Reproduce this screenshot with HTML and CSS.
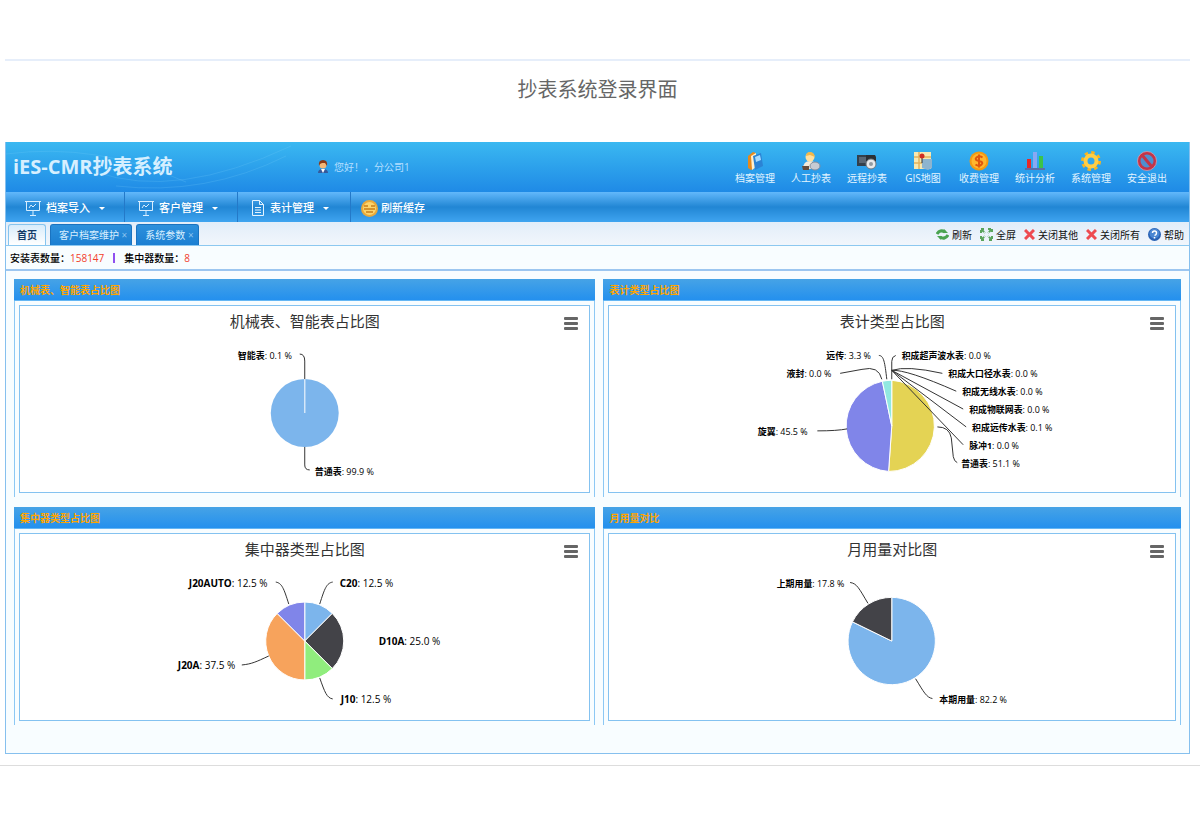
FILE: index.html
```html
<!DOCTYPE html>
<html lang="zh-CN">
<head>
<meta charset="utf-8">
<title>iES-CMR抄表系统</title>
<link rel="stylesheet" href="styles.css">
</head>
<body>
<h1 class="caption">抄表系统登录界面</h1>
<main class="app">
  <header class="banner">
    <svg class="swoosh" viewBox="0 0 300 50" aria-hidden="true"><path d="M90 30Q170 58 285 4M110 44Q200 54 280 14M0 12Q90 0 180 40" fill="none" stroke="#7fd0fa" stroke-opacity=".2"/></svg>
    <div class="brand">iES-CMR抄表系统</div>
    <div class="user">
      <svg width="12" height="14" viewBox="0 0 12 14"><path d="M1 13Q1 9 6 9T11 13Z" fill="#355a9c"/><path d="M4 9h4l-2 4z" fill="#fff"/><circle cx="6" cy="5" r="3.5" fill="#f3b777"/><path d="M2 6Q1 0 6 0T10 6L8 3H5L3 4Z" fill="#8a3a18"/></svg>
      <span>您好！，分公司1</span>
    </div>
    <nav class="tools">
      <a href="#"><svg viewBox="0 0 20 20"><path d="M3 5l5-4 3 1v14l-5 3-3-2z" fill="#e58a1c"/><path d="M6 5l5-3v14l-4 3z" fill="#fff0cf"/><path d="M8 5l8-3 2 13-8 4z" fill="#2b83d4"/><path d="M10 6l5-2 1 5-5 2z" fill="#a8dcff"/></svg>档案管理</a>
      <a href="#"><svg viewBox="0 0 20 20"><path d="M2 18Q2 10 9 10t8 8Z" fill="#f4ead8"/><path d="M1 15h7v4H2z" fill="#654c3b"/><circle cx="9" cy="6" r="4.500" fill="#ffe0a0"/><path d="M5 5Q5 1 9 1t5 5L9 4z" fill="#f2b84a"/><ellipse cx="14" cy="15" rx="5" ry="4" fill="#c7cbd3" stroke="#7f8da0"/></svg>人工抄表</a>
      <a href="#"><svg viewBox="0 0 20 20"><path d="M0 4h14v11H0z" fill="#33404c"/><path d="M2 6h9v6H2z" fill="#596775"/><path d="M9 4h9l1 2v5H9z" fill="#2a3036"/><circle cx="14" cy="13" r="5" fill="#e8eaec" stroke="#6d7880"/><circle cx="14" cy="13" r="2" fill="#929ba3"/></svg>远程抄表</a>
      <a href="#"><svg viewBox="0 0 20 20"><path d="M1 1h17v17H1z" fill="#f8e8b0"/><path d="M1 6h17M6 1v17M1 12h17" stroke="#e2b25c" stroke-width="1.500"/><path d="M9 8h10v9l-4 2-6-2z" fill="#8db4cf"/><path d="M9 5v7" stroke="#333"/><circle cx="9" cy="5" r="2.500" fill="#d22c20"/></svg>GIS地图</a>
      <a href="#"><svg viewBox="0 0 20 20"><circle cx="10" cy="10" r="9.500" fill="#f39a12"/><circle cx="10" cy="10" r="7.500" fill="#ffb62e"/><path d="M13.500 6.500Q10 4 7.500 6.500T10 10t2.500 3.500-6 0M10 3.500v13" stroke="#e0560d" stroke-width="2" fill="none"/></svg>收费管理</a>
      <a href="#"><svg viewBox="0 0 20 20"><path d="M0 17h20v2H0z" fill="#5a6fa8"/><path d="M2 8h4v9H2z" fill="#e82828"/><path d="M8 1h4v16H8z" fill="#88a8f4"/><path d="M14 5h4v12h-4z" fill="#3cc34a"/></svg>统计分析</a>
      <a href="#"><svg viewBox="0 0 20 20"><circle cx="10" cy="10" r="8" fill="none" stroke="#f8b520" stroke-width="4" stroke-dasharray="3.200 3.080"/><circle cx="10" cy="10" r="5.500" fill="none" stroke="#ffce45" stroke-width="4"/></svg>系统管理</a>
      <a href="#"><svg viewBox="0 0 20 20"><circle cx="10" cy="10" r="8" fill="#4f8fd0" stroke="#c43448" stroke-width="3"/><circle cx="10" cy="10" r="9.500" fill="none" stroke="#e8a1ad" stroke-width=".7"/><path d="M5 4l10 12" stroke="#c43448" stroke-width="3"/></svg>安全退出</a>
    </nav>
  </header>
  <nav class="menu">
    <button type="button"><svg width="16" height="16" viewBox="0 0 16 16" fill="none" stroke="#d8eeff"><path d="M0 1.500h16M1.500 2v8.500h13V2M8 11v4M5 15.500h6M4 8l2-3 2 2 3-3"/></svg>档案导入<i class="caret"></i></button>
    <button type="button"><svg width="16" height="16" viewBox="0 0 16 16" fill="none" stroke="#d8eeff"><path d="M0 1.500h16M1.500 2v8.500h13V2M8 11v4M5 15.500h6M4 8l2-3 2 2 3-3"/></svg>客户管理<i class="caret"></i></button>
    <button type="button"><svg width="14" height="16" viewBox="0 0 14 16" fill="none" stroke="#e4f3ff"><path d="M1.500.5h7l4 4v11h-11zM8.500.5v4h4M4 7.500h6M4 10h6M4 12.500h6"/></svg>表计管理<i class="caret"></i></button>
    <button type="button"><svg width="17" height="17" viewBox="0 0 17 17"><circle cx="8.500" cy="8.500" r="8.500" fill="#e9a93a"/><circle cx="8.500" cy="8.500" r="6.500" fill="#fcd46c"/><path d="M3 6h4M10 6h4M3 9h11M5 12h7" stroke="#c87d18" stroke-width="1.500"/></svg>刷新缓存</button>
  </nav>
  <div class="tabbar">
    <div class="tabs">
      <button type="button" class="tab active">首页</button>
      <button type="button" class="tab">客户档案维护 <span class="x">×</span></button>
      <button type="button" class="tab">系统参数 <span class="x">×</span></button>
    </div>
    <div class="actions">
      <button type="button"><svg width="13" height="13" viewBox="0 0 13 13" fill="none" stroke="#4aa350" stroke-width="3"><path d="M1 6Q4 1 9 4M12 7Q9 12 4 9"/><path d="M8 1l4 4H7zM5 12L1 8h5z" fill="#4aa350" stroke="none"/></svg>刷新</button>
      <button type="button"><svg width="13" height="13" viewBox="0 0 13 13" fill="none" stroke="#5aa45c" stroke-width="2"><path d="M1 5V1h4M8 1h4v4M1 8v4h4M12 8v4H8M2 2l3 3M11 2L8 5M2 11l3-3M11 11L8 8" stroke-dasharray="3 1"/></svg>全屏</button>
      <button type="button"><svg width="11" height="11" viewBox="0 0 11 11"><path d="M1 1l9 9M10 1l-9 9" stroke="#ee4a50" stroke-width="3"/></svg>关闭其他</button>
      <button type="button"><svg width="11" height="11" viewBox="0 0 11 11"><path d="M1 1l9 9M10 1l-9 9" stroke="#ee4a50" stroke-width="3"/></svg>关闭所有</button>
      <button type="button"><svg width="13" height="13" viewBox="0 0 13 13"><circle cx="6.500" cy="6.500" r="6.500" fill="#2861b4"/><circle cx="6.500" cy="5.500" r="5" fill="#4a86d2"/><path d="M4.500 5Q4.500 3 6.500 3t2 2T6.500 7.500M6.500 9v1.500" fill="none" stroke="#fff" stroke-width="1.500"/></svg>帮助</button>
    </div>
  </div>
  <div class="status">
    <span>安装表数量：<b>158147</b></span><i class="bar"></i><span>集中器数量：<b>8</b></span>
  </div>
  <div class="board">
    <section class="panel">
      <h2>机械表、智能表占比图</h2>
      <div class="body"><div class="chart">
        <div class="head"><h3>机械表、智能表占比图</h3><button type="button" class="burger" aria-label="菜单"><i></i><i></i><i></i></button></div>
        <svg class="plot" viewBox="0 0 570 154">
          <circle cx="285" cy="75" r="34" fill="#7cb5ec"/><path d="M285 75V41" stroke="#d5e7f9" stroke-width="1.500"/>
          <path class="line" d="M280 16Q285 16 285 23V41M285 109V127Q285 132 290 132"/>
          <text x="218" y="21"><tspan>智能表</tspan>: 0.1 %</text>
          <text x="295" y="137"><tspan>普通表</tspan>: 99.9 %</text>
        </svg>
      </div></div>
    </section>
    <section class="panel">
      <h2>表计类型占比图</h2>
      <div class="body"><div class="chart">
        <div class="head"><h3>表计类型占比图</h3><button type="button" class="burger" aria-label="菜单"><i></i><i></i><i></i></button></div>
        <svg class="plot" viewBox="0 0 570 154">
          <g stroke="#fff"><path d="M285 88V42A46 46 0 0 1 281.800 133.900Z" fill="#e4d354"/><path d="M285 88L281.800 133.900A46 46 0 0 1 275.500 43Z" fill="#8085e9"/><path d="M285 88L275.500 43A46 46 0 0 1 285 42Z" fill="#91e8e1"/></g>
          <path class="line" d="M272 17C277 17 278 24 280 41M233 35L255 31Q272 27 275 41M289 17Q285 18 285 23V41M285 32Q300 27 336 35M285 32Q300 31 350 53M285 32L357 71M285 32L360 89M285 32L357 107M331 89Q343 89 345 100L347 119Q348 124 351 125M210 93Q230 93 240 91"/>
          <text x="219" y="21"><tspan>远传</tspan>: 3.3 %</text>
          <text x="179" y="39"><tspan>液封</tspan>: 0.0 %</text>
          <text x="150" y="97"><tspan>旋翼</tspan>: 45.5 %</text>
          <text x="295" y="21"><tspan>积成超声波水表</tspan>: 0.0 %</text>
          <text x="342" y="39"><tspan>积成大口径水表</tspan>: 0.0 %</text>
          <text x="356" y="57"><tspan>积成无线水表</tspan>: 0.0 %</text>
          <text x="363" y="75"><tspan>积成物联网表</tspan>: 0.0 %</text>
          <text x="366" y="93"><tspan>积成远传水表</tspan>: 0.1 %</text>
          <text x="363" y="111"><tspan>脉冲1</tspan>: 0.0 %</text>
          <text x="355" y="129"><tspan>普通表</tspan>: 51.1 %</text>
        </svg>
      </div></div>
    </section>
    <section class="panel">
      <h2>集中器类型占比图</h2>
      <div class="body"><div class="chart">
        <div class="head"><h3>集中器类型占比图</h3><button type="button" class="burger" aria-label="菜单"><i></i><i></i><i></i></button></div>
        <svg class="plot latin" viewBox="0 0 570 154">
          <g stroke="#fff"><path d="M285 75V36A39 39 0 0 1 312.600 47.400Z" fill="#7cb5ec"/><path d="M285 75L312.600 47.400A39 39 0 0 1 312.600 102.600Z" fill="#434348"/><path d="M285 75L312.600 102.600A39 39 0 0 1 285 114Z" fill="#90ed7d"/><path d="M285 75V114A39 39 0 0 1 257.400 47.400Z" fill="#f7a35c"/><path d="M285 75L257.400 47.400A39 39 0 0 1 285 36Z" fill="#8085e9"/></g>
          <path class="line" d="M256 16C262 17 264 22 269 38M313 16C307 17 305 22 300 38M222 99C232 98 236 96 249 90M300 112C305 126 307 132 313 133"/>
          <text x="169" y="21"><tspan>J20AUTO</tspan>: 12.5 %</text>
          <text x="320" y="21"><tspan>C20</tspan>: 12.5 %</text>
          <text x="359" y="79"><tspan>D10A</tspan>: 25.0 %</text>
          <text x="158" y="103"><tspan>J20A</tspan>: 37.5 %</text>
          <text x="321" y="137"><tspan>J10</tspan>: 12.5 %</text>
        </svg>
      </div></div>
    </section>
    <section class="panel">
      <h2>月用量对比</h2>
      <div class="body"><div class="chart">
        <div class="head"><h3>月用量对比图</h3><button type="button" class="burger" aria-label="菜单"><i></i><i></i><i></i></button></div>
        <svg class="plot" viewBox="0 0 570 154">
          <g stroke="#fff"><path d="M285 75V31A44 44 0 1 1 245.400 55.700Z" fill="#7cb5ec"/><path d="M285 75L245.400 55.700A44 44 0 0 1 285 31Z" fill="#434348"/></g>
          <path class="line" d="M243 16C250 17 252 22 261 37M309 113C317 126 320 132 326 133"/>
          <text x="169" y="21"><tspan>上期用量</tspan>: 17.8 %</text>
          <text x="333" y="137"><tspan>本期用量</tspan>: 82.2 %</text>
        </svg>
      </div></div>
    </section>
  </div>
</main>
<hr class="end">
</body>
</html>
```
FILE: styles.css
```css
* { box-sizing: border-box; }
body {
  margin: 0;
  padding-top: 59px;
  background: #fff;
  font-family: "Open Sans", "Noto Sans CJK SC", sans-serif;
  font-size: 10px;
  line-height: 14px;
}
h1, h2, h3 { margin: 0; font-weight: 400; }
button { border: 0; padding: 0; background: none; font: inherit; color: inherit; cursor: pointer; }
.caption {
  margin: 0 10px 0 5px;
  padding: 14px 0 37px;
  border-top: 2px solid #e6eefa;
  font-size: 20px;
  line-height: 30px;
  text-align: center;
  color: #666;
}
.app { margin: 0 10px 0 5px; border: 1px solid #86c0ee; border-top: 0; background: #f8fdff; }

.banner {
  position: relative;
  display: flex;
  align-items: center;
  height: 50px;
  padding: 0 14px 0 7px;
  background: linear-gradient(#3ab8f1, #1f8ae6);
  color: #e2f4ff;
}
.swoosh { position: absolute; left: 0; top: 0; width: 300px; height: 50px; }
.brand { width: 304px; font-size: 20px; line-height: 28px; font-weight: 700; color: #d6efff; }
.user { display: flex; align-items: center; gap: 5px; flex: 1; color: #b4dfff; }
.tools { display: flex; }
.tools a {
  display: flex;
  flex-direction: column;
  align-items: center;
  width: 56px;
  padding-top: 2px;
  color: #e2f4ff;
  text-decoration: none;
}
.tools svg { width: 20px; height: 20px; }

.menu {
  display: flex;
  height: 30px;
  padding-left: 6px;
  background: linear-gradient(#62b8fb, #2186d4 50%, #3fa4f0);
}
.menu button {
  display: flex;
  align-items: center;
  gap: 5px;
  width: 113px;
  padding: 2px 0 0 13px;
  border-right: 1px solid #2479c8;
  color: #fff;
  font-size: 11px;
  font-weight: 500;
}
.menu button:last-child { border-right: 0; gap: 3px; padding-left: 10px; }
.caret { margin-left: 4px; border: 3px solid transparent; border-top-color: #fff; border-bottom: 0; }

.tabbar {
  display: flex;
  justify-content: space-between;
  height: 24px;
  padding: 2px 5px 0 2px;
  border-bottom: 1px solid #8cc8f0;
  background: linear-gradient(#e2edf9, #f1f6fc);
}
.tabs { display: flex; gap: 4px; }
.tab {
  padding: 0 4px 0 8px;
  border: 1px solid #1a73c0;
  border-bottom: 0;
  border-radius: 3px 3px 0 0;
  background: linear-gradient(#2d90dc, #1b7fd2);
  color: #d8efff;
}
.tab.active { padding: 0 8px; border-color: #86c4ee; background: linear-gradient(#d8ecfb, #fff); color: #123a68; font-weight: 700; }
.x { color: #8cc4ee; }
.actions { display: flex; gap: 8px; color: #111; }
.actions button { display: flex; align-items: center; gap: 3px; }

.status {
  display: flex;
  align-items: center;
  height: 25px;
  padding-left: 4px;
  border-bottom: 2px solid #9cc6f0;
  color: #000;
  font-weight: 500;
}
.status b { color: #f2402c; font-weight: 400; }
.bar { width: 2px; height: 10px; margin: 0 9px; background: #8f50f0; }

.board {
  display: grid;
  grid-template-columns: minmax(0, 582fr) minmax(0, 578fr);
  gap: 10px 8px;
  padding: 8px 8px 28px;
}
.panel h2 {
  height: 22px;
  padding: 0 6px;
  border-bottom: 1px solid #64b6f4;
  background: linear-gradient(#46a3e6, #2490ee);
  color: #ffa500;
  font-size: 10px;
  font-weight: 700;
  line-height: 22px;
}
.body { padding: 4px; border: solid #8cc8f4; border-width: 0 1px; }
.chart { border: 1px solid #84c2f0; background: #fff; }
.head { display: grid; grid-template-columns: 1fr auto 1fr; align-items: center; height: 32px; padding: 0 11px; }
.head h3 { grid-column: 2; padding-bottom: 2px; font-size: 15px; line-height: 22px; color: #333; }
.burger { display: grid; gap: 2px; justify-self: end; width: 14px; padding-top: 3px; }
.burger i { height: 3px; border-radius: 1px; background: #666; }
.plot { display: block; width: 100%; height: 154px; }
.plot text { font-size: 9px; fill: #000; }
.plot.latin text { font-size: 10px; }
.plot tspan { font-weight: 700; }
.line { fill: none; stroke: #333; stroke-width: 1; }
.end { margin: 11px 0 0; border: 0; border-top: 1px solid #ddd; }
```
